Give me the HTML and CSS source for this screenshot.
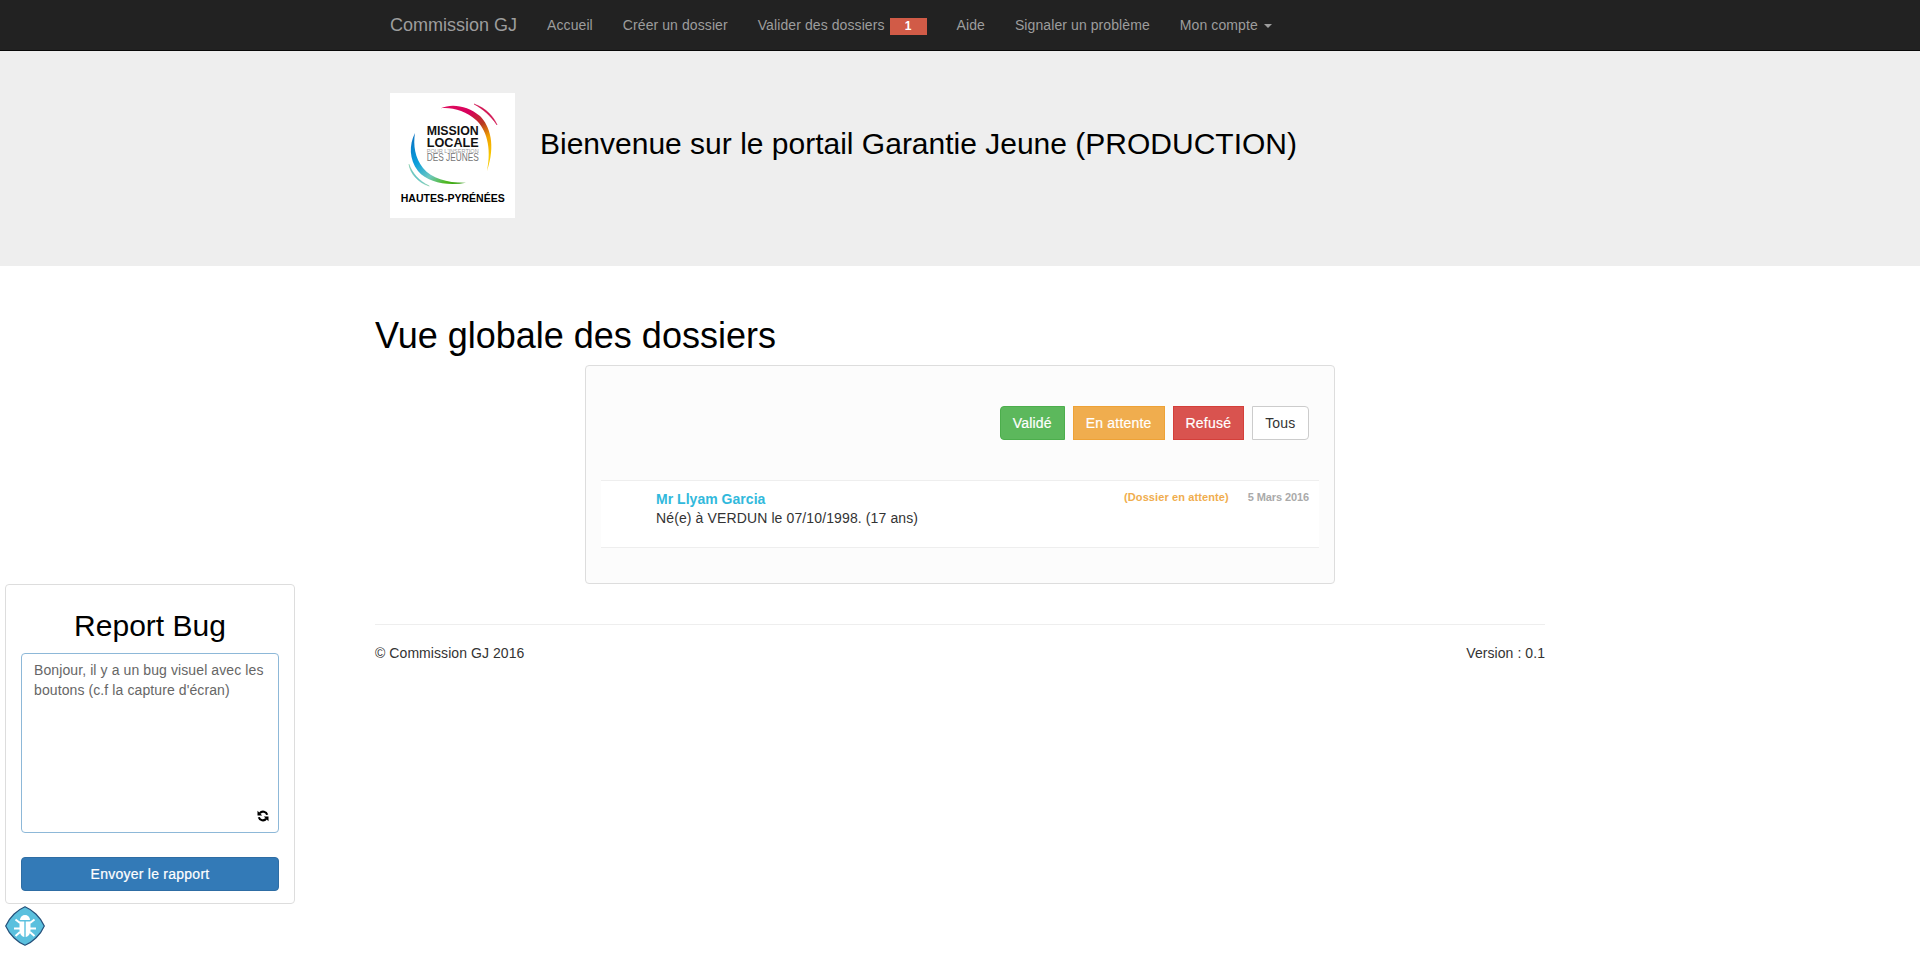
FILE: index.html
```html
<!DOCTYPE html>
<html lang="fr">
<head>
  <meta charset="UTF-8" />
  <meta name="viewport" content="width=device-width, initial-scale=1.0"/>
  <title>Commission GJ</title>
  <link rel="stylesheet" href="styles.css">
</head>
<body>

<nav class="navbar">
  <div class="container navbar-inner">
    <a class="brand" href="#">Commission GJ</a>
    <a class="nav-link" href="#">Accueil</a>
    <a class="nav-link" href="#">Créer un dossier</a>
    <a class="nav-link" href="#">Valider des dossiers <span class="badge">1</span></a>
    <a class="nav-link" href="#">Aide</a>
    <a class="nav-link" href="#">Signaler un problème</a>
    <a class="nav-link" href="#">Mon compte <span class="caret"></span></a>
  </div>
</nav>

<header class="jumbotron">
  <div class="container jumbotron-inner">
    <svg class="logo" viewBox="0 0 125 125" width="125" height="125">
      <defs>
        <linearGradient id="arcTop" x1="0" y1="0" x2="0.5" y2="1">
          <stop offset="0" stop-color="#e0105f"/>
          <stop offset="0.3" stop-color="#d8005c"/>
          <stop offset="0.55" stop-color="#b83a20"/>
          <stop offset="0.75" stop-color="#f0a000"/>
          <stop offset="1" stop-color="#f8c800"/>
        </linearGradient>
        <linearGradient id="arcBottom" x1="0" y1="0" x2="1" y2="1">
          <stop offset="0" stop-color="#0a6fc0"/>
          <stop offset="0.35" stop-color="#0a9fdc"/>
          <stop offset="0.6" stop-color="#6fc8c0"/>
          <stop offset="0.8" stop-color="#50b820"/>
          <stop offset="1" stop-color="#209000"/>
        </linearGradient>
      </defs>
      <rect width="125" height="125" fill="#fff"/>
      <path d="M50.700 15.300C62 10 78 13 90 23C100 33 106 52 97 78C102 54 96 36 86 27C76 18 62 14 50.700 15.300Z" fill="url(#arcTop)"/>
      <path d="M84 11C96 15 104 24 107 32C101 23 93 16 84 11Z" fill="#d0104f" stroke="#d0104f" stroke-width=".5"/>
      <path d="M25 40C19 52 19 66 28 78C38 90 58 93 76 89.700C58 90 42 86 33 75C25 65 23 52 25 40Z" fill="url(#arcBottom)"/>
      <path d="M19 71.300C20 80 28 90 39.300 93C29 88 22 80 19 71.300Z" fill="#5cc3d6" stroke="#7cc8a0" stroke-width=".5"/>
      <text class="logo-title" x="36.700" y="42" textLength="52" lengthAdjust="spacingAndGlyphs">MISSION</text>
      <text class="logo-title" x="36.700" y="53.500" textLength="52" lengthAdjust="spacingAndGlyphs">LOCALE</text>
      <text class="logo-small" x="36.700" y="60" textLength="52" lengthAdjust="spacingAndGlyphs">POUR L'INSERTION</text>
      <text class="logo-sub" x="36.700" y="68" textLength="52" lengthAdjust="spacingAndGlyphs">DES JEUNES</text>
      <text class="logo-place" x="10.700" y="108.700" textLength="104" lengthAdjust="spacingAndGlyphs">HAUTES-PYRÉNÉES</text>
    </svg>
    <h1>Bienvenue sur le portail Garantie Jeune (PRODUCTION)</h1>
  </div>
</header>

<main class="container">
  <h2 class="page-title">Vue globale des dossiers</h2>

  <section class="panel">
    <div class="filters">
      <button class="btn btn-success">Validé</button>
      <button class="btn btn-warning">En attente</button>
      <button class="btn btn-danger">Refusé</button>
      <button class="btn btn-default">Tous</button>
    </div>
    <div class="dossier">
      <div class="dossier-text">
        <a class="dossier-name" href="#">Mr Llyam Garcia</a>
        <p>Né(e) à VERDUN le 07/10/1998. (17 ans)</p>
      </div>
      <span class="dossier-status">(Dossier en attente)</span>
      <span class="dossier-date">5 Mars 2016</span>
    </div>
  </section>

  <footer class="footer">
    <span>© Commission GJ 2016</span>
    <span>Version : 0.1</span>
  </footer>
</main>

<aside class="report">
  <h3>Report Bug</h3>
  <div class="report-field">
    <textarea>Bonjour, il y a un bug visuel avec les boutons (c.f la capture d'écran)</textarea>
    <svg class="report-refresh" viewBox="0 0 12 12" width="12" height="12">
      <path d="M10.200 4.800A4.300 4.300 0 0 0 2.800 3.200" fill="none" stroke="#000" stroke-width="2.200"/>
      <path d="M1.800 7.200A4.300 4.300 0 0 0 9.200 8.800" fill="none" stroke="#000" stroke-width="2.200"/>
      <path d="M0.500 0.800V5.500H5.200Z" fill="#000"/>
      <path d="M11.500 11.200V6.500H6.800Z" fill="#000"/>
    </svg>
  </div>
  <button class="btn-send">Envoyer le rapport</button>
</aside>

<button class="bug-toggle" aria-label="Report Bug">
  <svg viewBox="0 0 40 40" width="40" height="40">
    <path d="M20 .7C27 3.500 35.500 11 39.300 20C35.500 29 27 36.500 20 39.300C13 36.500 4.500 29 .7 20C4.500 11 13 3.500 20 .7Z" fill="#5bc0de" stroke="#25507a" stroke-width="1.200"/>
    <path d="M15 14A5 5 0 0 1 25 14Z" fill="#fff"/>
    <path d="M14.500 15.500H19.300V31C16.500 30.500 14.500 27.500 14.500 24Z" fill="#fff"/>
    <path d="M20.700 15.500H25.500V24C25.500 27.500 23.500 30.500 20.700 31Z" fill="#fff"/>
    <path d="M15 17L10.500 13.500M15 22.500H9M15 26L10.500 30M25 17L29.500 13.500M25 22.500H31M25 26L29.500 30" stroke="#fff" stroke-width="2" fill="none"/>
  </svg>
</button>

</body>
</html>
```

FILE: styles.css
```css
* {
  box-sizing: border-box;
}
body {
  margin: 0;
  font-family: "Liberation Sans", Arial, sans-serif;
  font-size: 14px;
  line-height: 1.42857;
  color: #333;
  background: #fff;
}
.container {
  width: 1170px;
  margin: 0 auto;
}

/* Barre de navigation */
.navbar {
  height: 51px;
  background: #222;
  border-bottom: 1px solid #080808;
}
.navbar-inner {
  display: flex;
  padding-left: 15px;
}
.navbar a {
  display: block;
  color: #9d9d9d;
  text-decoration: none;
  line-height: 20px;
}
.brand {
  font-size: 18px;
  padding: 15px 15px 15px 0;
}
.nav-link {
  padding: 15px;
  letter-spacing: .09px;
}
.badge {
  display: inline-block;
  width: 37px;
  height: 17px;
  margin-left: 1px;
  background: #d15b47;
  color: #fff;
  font-size: 12px;
  font-weight: bold;
  line-height: 17px;
  text-align: center;
}
.caret {
  display: inline-block;
  margin-left: 2px;
  vertical-align: middle;
  border-top: 4px solid #9d9d9d;
  border-left: 4px solid transparent;
  border-right: 4px solid transparent;
}

/* Bandeau */
.jumbotron {
  height: 215px;
  background: #eee;
  padding-top: 42px;
}
.jumbotron-inner {
  display: flex;
  padding-left: 15px;
}
.logo {
  flex: none;
}
.logo text {
  font-family: "Liberation Sans", Arial, sans-serif;
}
.logo-title {
  font-size: 12.500px;
  font-weight: bold;
  fill: #111;
}
.logo-small {
  font-size: 6px;
  fill: #999;
}
.logo-sub {
  font-size: 10px;
  fill: #777;
}
.logo-place {
  font-size: 11px;
  font-weight: bold;
  fill: #000;
}
.jumbotron h1 {
  margin: 34px 0 0 25px;
  font-size: 30px;
  font-weight: normal;
  line-height: 33px;
  color: #000;
}

/* Contenu */
.page-title {
  margin: 50px 0 9px;
  font-size: 36px;
  font-weight: normal;
  line-height: 40px;
  color: #000;
}
.panel {
  width: 750px;
  height: 219px;
  margin: 0 auto;
  padding: 40px 15px 0;
  background: #fcfcfc;
  border: 1px solid #ddd;
  border-radius: 4px;
}
.filters {
  display: flex;
  justify-content: flex-end;
  gap: 8px;
  padding-right: 10.500px;
}
.btn {
  height: 34px;
  padding: 0 12px;
  font-family: inherit;
  font-size: 14px;
  letter-spacing: .2px;
  border: 1px solid transparent;
  border-radius: 0;
  color: #fff;
  -webkit-text-stroke: .2px;
}
.btn-success {
  background: #5cb85c;
  border-color: #4cae4c;
  border-radius: 4px 0 0 4px;
}
.btn-warning {
  background: #f0ad4e;
  border-color: #eea236;
}
.btn-danger {
  background: #d9534f;
  border-color: #d43f3a;
}
.btn-default {
  background: #fff;
  border-color: #ccc;
  border-radius: 0 4px 4px 0;
  color: #333;
  -webkit-text-stroke: 0;
}
.dossier {
  display: flex;
  align-items: flex-start;
  height: 68px;
  margin-top: 40px;
  padding: 9px 10px 0 55px;
  background: #fff;
  border-top: 1px solid #eee;
  border-bottom: 1px solid #eee;
}
.dossier-text {
  flex: 1;
}
.dossier-name {
  display: block;
  font-weight: bold;
  color: #31b9dc;
  text-decoration: none;
  line-height: 18px;
  letter-spacing: .03px;
}
.dossier-text p {
  margin: 0;
  line-height: 20px;
  letter-spacing: .12px;
}
.dossier-status {
  font-size: 11px;
  font-weight: bold;
  letter-spacing: .1px;
  color: #f0ad4e;
}
.dossier-date {
  margin-left: 19px;
  font-size: 11px;
  font-weight: bold;
  letter-spacing: -.1px;
  color: #aaa;
}
.footer {
  display: flex;
  justify-content: space-between;
  margin-top: 40px;
  padding-top: 19px;
  border-top: 1px solid #eee;
  letter-spacing: .07px;
}

/* Rapport de bug */
.report {
  position: fixed;
  left: 5px;
  top: 584px;
  width: 290px;
  height: 320px;
  padding: 0 15px;
  background: #fff;
  border: 1px solid #ddd;
  border-radius: 4px;
}
.report h3 {
  margin: 24px 0 11px;
  font-size: 30px;
  font-weight: normal;
  line-height: 33px;
  text-align: center;
  color: #000;
}
.report-field {
  position: relative;
  height: 180px;
}
.report-field textarea {
  display: block;
  width: 100%;
  height: 100%;
  padding: 6px 12px;
  font-family: inherit;
  font-size: 14px;
  line-height: 20px;
  letter-spacing: .1px;
  color: #666;
  border: 1px solid #8db8d8;
  border-radius: 4px;
  outline: none;
  resize: none;
}
.report-refresh {
  position: absolute;
  right: 10px;
  bottom: 11px;
}
.btn-send {
  display: block;
  width: 100%;
  height: 34px;
  margin-top: 24px;
  font-family: inherit;
  font-size: 14px;
  letter-spacing: .25px;
  -webkit-text-stroke: .2px;
  color: #fff;
  background: #337ab7;
  border: 1px solid #2e6da4;
  border-radius: 4px;
}
.bug-toggle {
  position: fixed;
  left: 5px;
  top: 906px;
  width: 40px;
  height: 40px;
  padding: 0;
  background: none;
  border: none;
}
.bug-toggle svg {
  display: block;
}
```
